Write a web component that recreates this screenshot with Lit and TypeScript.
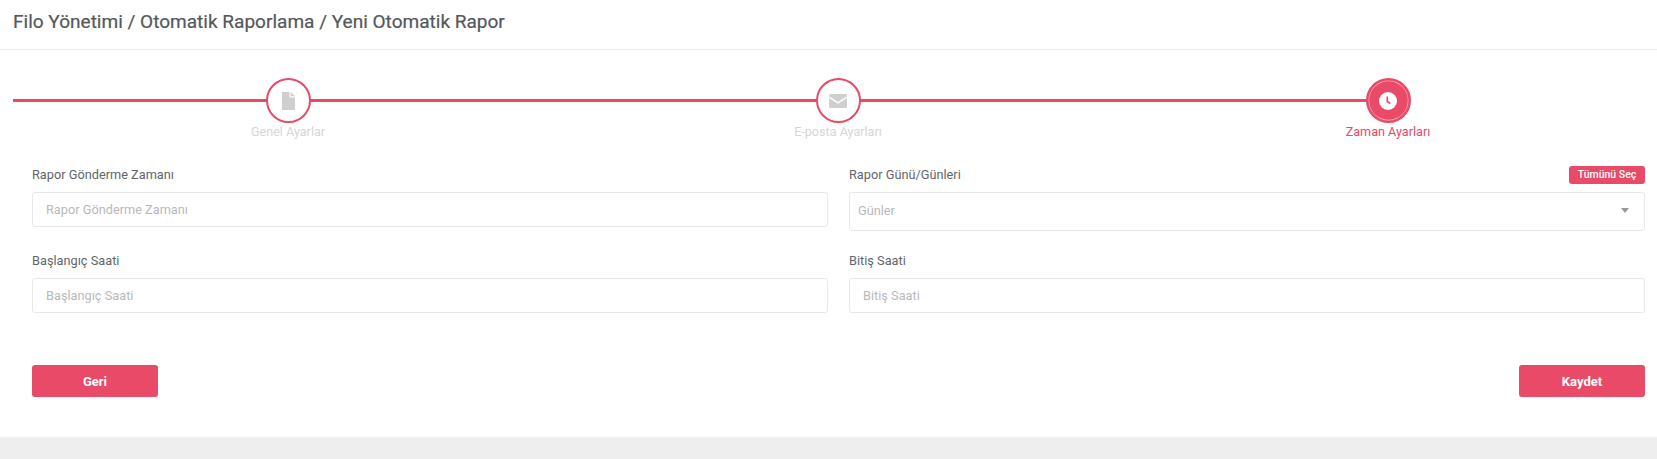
import { LitElement, html, css } from "lit";
import { customElement } from "lit/decorators.js";

@customElement("app-root")
export class AppRoot extends LitElement {
  static styles = css`
    :host { display: block; width: 100%; height: 459px; overflow: hidden; background: #eeeeee; font-family: Roboto, "Liberation Sans", sans-serif; }
    .card { background: #fff; height: 437px; box-sizing: border-box; }
    .head { height: 50px; box-sizing: border-box; border-bottom: 1px solid #eaeaea; padding: 11px 13px 0; font-size: 19.05px; line-height: 22px; font-weight: 400; color: #54575c; -webkit-text-stroke: 0.2px #54575c; }
    .steps { display: grid; grid-template-columns: repeat(3, 550px); padding: 28px 0 0 13px; height: 70px; overflow: hidden; }
    .step { position: relative; display: flex; flex-direction: column; align-items: center; }
    .step::before { content: ""; position: absolute; left: 0; right: 0; top: 21px; height: 3px; background: #e94a67; }
    .step.last::before { right: 50%; }
    .circle { position: relative; width: 45px; height: 45px; box-sizing: border-box; border: 2px solid #e94a67; border-radius: 50%; background: #fff; display: flex; align-items: center; justify-content: center; }
    .step.active .circle { background: #e94a67; box-shadow: inset 0 0 0 .6px #e94a67, inset 0 0 0 1.2px rgba(255,255,255,.6); }
    .step span { margin-top: 1px; font-size: 12.6px; line-height: 16px; color: #d6d6d6; }
    .step.active span { color: #e94a67; }
    .form { display: grid; grid-template-columns: 796px 796px; column-gap: 21px; padding: 0 12px 0 32px; margin-top: 9px; }
    .field { display: flex; flex-direction: column; height: 86px; }
    .lab { display: flex; justify-content: space-between; align-items: flex-end; height: 25px; font-size: 12.75px; line-height: 14px; color: #62656a; padding-bottom: 10px; }
    .in { box-sizing: border-box; height: 35px; border: 1px solid #e8e8e8; border-radius: 3px; padding: 0 13px; display: flex; align-items: center; font-size: 12.75px; color: #b9b9b9; background: #fff; }
    .in.sel { height: 39px; padding: 0 8px 2px; justify-content: space-between; }
    .caret { width: 0; height: 0; border-left: 4px solid transparent; border-right: 4px solid transparent; border-top: 5px solid #999; margin-right: 7px; }
    .tag { background: #e94a67; color: #fff; font-size: 10.5px; line-height: 12px; font-weight: 500; border-radius: 3px; padding: 3px 0; width: 76px; text-align: center; height: 18px; box-sizing: border-box; margin-bottom: -2px; }
    .actions { display: flex; justify-content: space-between; padding: 0 12px 0 32px; margin-top: 36px; }
    .btn { width: 126px; height: 32px; background: #e94a67; color: #fff; border: 0; border-radius: 3px; font: 700 13px Roboto, sans-serif; display: flex; align-items: center; justify-content: center; padding: 0; }
  `;

  step(label: string, icon: unknown, cls: string) {
    return html`<div class="step ${cls}"><div class="circle">${icon}</div><span>${label}</span></div>`;
  }

  render() {
    const doc = html`<svg width="13" height="18" viewBox="0 0 13 18"><path fill="#cfcfcf" d="M0 0h7.5v5.5H13V18H0z"/><path fill="#cfcfcf" d="M8.7 0 13 4.3H8.7z"/></svg>`;
    const mail = html`<svg width="18" height="14" viewBox="0 0 18 14"><path fill="#cfcfcf" d="M1.5 0h15A1.5 1.5 0 0 1 18 1.5v.7L9 8 0 2.2v-.7A1.5 1.5 0 0 1 1.5 0z"/><path fill="#cfcfcf" d="M0 4v8.5A1.5 1.5 0 0 0 1.5 14h15a1.5 1.5 0 0 0 1.5-1.5V4L9 9.8z"/></svg>`;
    const clock = html`<svg width="18" height="18" viewBox="0 0 18 18"><circle cx="9" cy="9" r="9" fill="#fff"/><path d="M8.3 4.5v5l3 2" fill="none" stroke="#e94a67" stroke-width="1.6"/></svg>`;
    return html`
      <div class="card">
        <div class="head">Filo Yönetimi / Otomatik Raporlama / Yeni Otomatik Rapor</div>
        <div class="steps">
          ${this.step("Genel Ayarlar", doc, "")}
          ${this.step("E-posta Ayarları", mail, "")}
          ${this.step("Zaman Ayarları", clock, "active last")}
        </div>
        <div class="form">
          <div class="field"><div class="lab">Rapor Gönderme Zamanı</div><div class="in">Rapor Gönderme Zamanı</div></div>
          <div class="field"><div class="lab">Rapor Günü/Günleri<div class="tag">Tümünü Seç</div></div><div class="in sel">Günler<i class="caret"></i></div></div>
          <div class="field"><div class="lab">Başlangıç Saati</div><div class="in">Başlangıç Saati</div></div>
          <div class="field"><div class="lab">Bitiş Saati</div><div class="in">Bitiş Saati</div></div>
        </div>
        <div class="actions"><button class="btn">Geri</button><button class="btn">Kaydet</button></div>
      </div>
    `;
  }
}
